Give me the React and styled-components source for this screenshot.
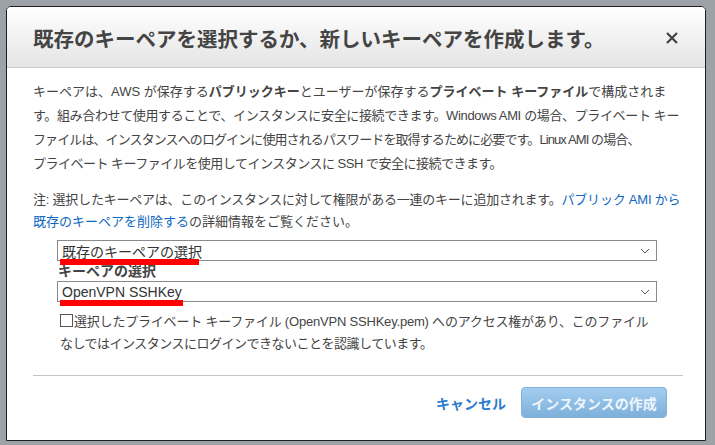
import React from "react";
import styled, { createGlobalStyle } from "styled-components";

const GlobalStyle = createGlobalStyle`
  html, body {
    margin: 0;
    padding: 0;
    background: #9da2a8;
  }
  body {
    font-family: "Liberation Sans", "Noto Sans CJK JP", sans-serif;
    color: #444;
  }
`;

const Page = styled.div`
  width: 715px;
  height: 445px;
  box-sizing: border-box;
  padding: 6px 0 0 6px;
  background: #9da2a8;
`;

const Dialog = styled.div`
  width: 700px;
  height: 435px;
  box-sizing: border-box;
  border: 1px solid #1e1e1e;
  border-radius: 5px 5px 0 0;
  background: #fff;
  display: flex;
  flex-direction: column;
  overflow: hidden;
`;

const Header = styled.div`
  height: 60px;
  flex-shrink: 0;
  display: flex;
  align-items: center;
  justify-content: space-between;
  padding: 0 26px 0 26px;
  background: linear-gradient(#ffffff, #e4e4e4);
  border-bottom: 1px solid #c9c9c9;
`;

const Title = styled.h1`
  margin: 0;
  font-size: 20.5px;
  font-weight: 700;
  color: #444;
  padding-top: 1px;
`;

const Close = styled.button`
  border: none;
  background: none;
  padding: 0;
  width: 14px;
  height: 14px;
  display: flex;
  margin-top: 1px;
  cursor: pointer;
`;

const Body = styled.div`
  padding: 12px 22px 0 26px;
  font-size: 13px;
`;

const Para = styled.div`
  margin: 0 0 ${(p) => p.gap || 0}px;
  line-height: ${(p) => p.lh}px;
`;

const Line = styled.span`
  display: block;
  white-space: nowrap;
  letter-spacing: ${(p) => p.ls || 0}px;
`;

const Link = styled.a`
  color: #0f67c2;
  text-decoration: none;
`;

const Selects = styled.div`
  margin: 0 26px 0 24px;
  display: flex;
  flex-direction: column;
`;

const SelectWrap = styled.div`
  position: relative;
`;

const SelectBox = styled.div`
  height: 21px;
  box-sizing: border-box;
  border: 1px solid #8a8a8a;
  display: flex;
  align-items: center;
  justify-content: space-between;
  padding: 0 6px 0 4px;
  font-size: 14px;
  color: #333;
`;

const Marker = styled.span`
  position: absolute;
  left: 3px;
  top: ${(p) => p.top}px;
  width: ${(p) => p.w}px;
  height: 6px;
  background: #ff0000;
`;

const FieldLabel = styled.div`
  font-size: 14px;
  font-weight: 700;
  line-height: 20px;
  padding-left: 1px;
  color: #444;
`;

const Ack = styled.div`
  margin: 9px 0 0 27px;
  line-height: 22px;
`;

const Box = styled.span`
  display: inline-block;
  width: 11px;
  height: 11px;
  border: 1px solid #555;
  vertical-align: -1px;
  margin-right: 1px;
`;

const Divider = styled.hr`
  margin: 20px 0 0;
  border: none;
  border-top: 1px solid #c4c4c4;
`;

const Footer = styled.div`
  display: flex;
  justify-content: flex-end;
  align-items: center;
  gap: 15px;
  padding: 11px 16px 0 0;
`;

const Cancel = styled.a`
  font-size: 14px;
  font-weight: 700;
  color: #2b7bd0;
  text-decoration: none;
`;

const CreateButton = styled.button`
  width: 146px;
  height: 31px;
  border: 1px solid #86b2d8;
  border-radius: 4px;
  background: linear-gradient(#a2cdef, #7eb0da);
  color: #eef5fc;
  font-family: inherit;
  font-size: 14px;
  font-weight: 700;
  padding: 0;
`;

const Chevron = () => (
  <svg width="10" height="6" viewBox="0 0 10 6">
    <path d="M1 1 L5 5 L9 1" fill="none" stroke="#555" strokeWidth="1" />
  </svg>
);

const App = () => {
  return (
    <Page>
      <GlobalStyle />
      <Dialog>
        <Header>
          <Title>既存のキーペアを選択するか、新しいキーペアを作成します。</Title>
          <Close aria-label="close">
            <svg width="14" height="14" viewBox="0 0 14 14">
              <path d="M2 2 L12 12 M12 2 L2 12" stroke="#444" strokeWidth="2.2" />
            </svg>
          </Close>
        </Header>
        <Body>
          <Para lh={24} gap={13}>
            <Line>
              キーペアは、AWS が保存する<b>パブリックキー</b>とユーザーが保存する<b>プライベート キーファイル</b>で構成されま
            </Line>
            <Line ls={-0.36}>
              す。組み合わせて使用することで、インスタンスに安全に接続できます。Windows AMI の場合、プライベート キー
            </Line>
            <Line ls={-0.9}>
              ファイルは、インスタンスへのログインに使用されるパスワードを取得するために必要です。Linux AMI の場合、
            </Line>
            <Line ls={-0.5}>
              プライベート キーファイルを使用してインスタンスに SSH で安全に接続できます。
            </Line>
          </Para>
          <Para lh={22} gap={7}>
            <Line ls={-0.22}>
              注: 選択したキーペアは、このインスタンスに対して権限がある一連のキーに追加されます。<Link href="#">パブリック AMI から</Link>
            </Line>
            <Line>
              <Link href="#">既存のキーペアを削除する</Link>の詳細情報をご覧ください。
            </Line>
          </Para>
          <Selects>
            <SelectWrap>
              <SelectBox>
                <span>既存のキーペアの選択</span>
                <Chevron />
              </SelectBox>
              <Marker top={19} w={139} />
            </SelectWrap>
            <FieldLabel>キーペアの選択</FieldLabel>
            <SelectWrap>
              <SelectBox>
                <span>OpenVPN SSHKey</span>
                <Chevron />
              </SelectBox>
              <Marker top={19} w={123} />
            </SelectWrap>
          </Selects>
          <Ack>
            <Line ls={-0.2}>
              <Box />選択したプライベート キーファイル (OpenVPN SSHKey.pem) へのアクセス権があり、このファイル
            </Line>
            <Line ls={-0.5}>なしではインスタンスにログインできないことを認識しています。</Line>
          </Ack>
          <Divider />
          <Footer>
            <Cancel href="#">キャンセル</Cancel>
            <CreateButton disabled>インスタンスの作成</CreateButton>
          </Footer>
        </Body>
      </Dialog>
    </Page>
  );
};

export default App;
